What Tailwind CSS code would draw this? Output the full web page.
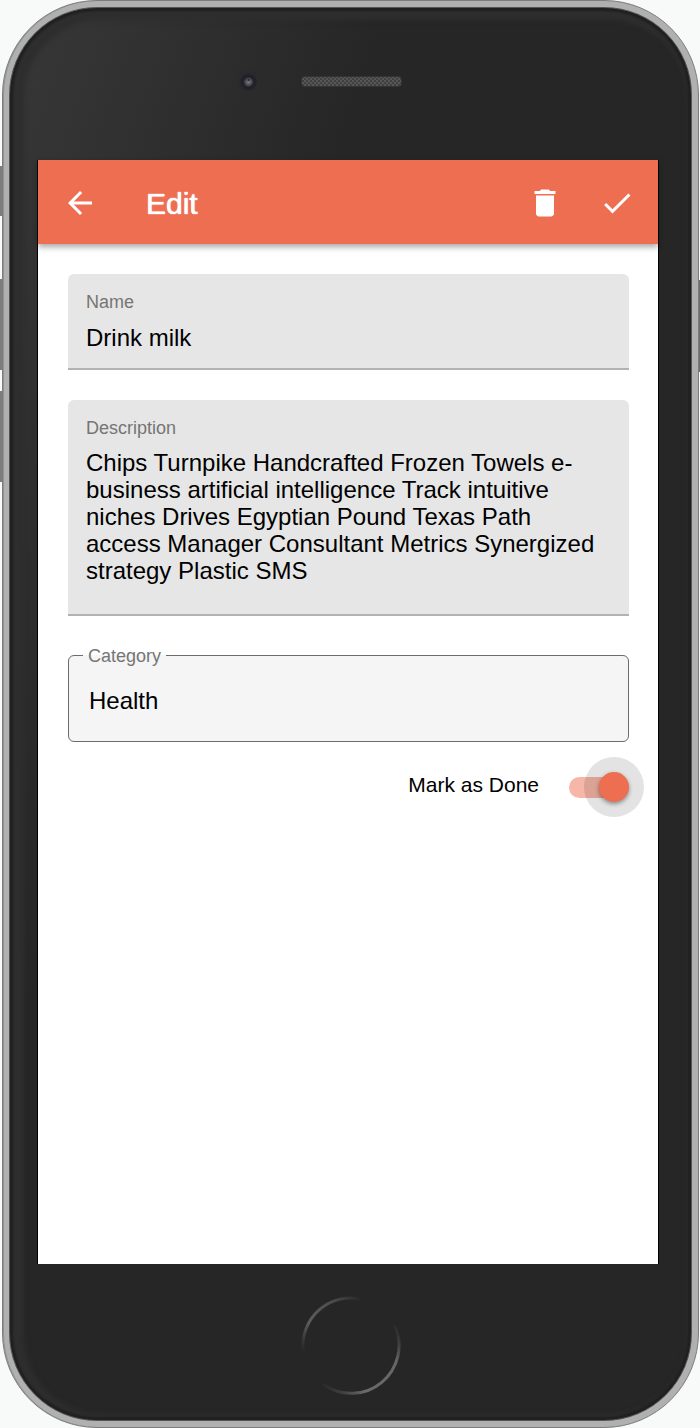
<!DOCTYPE html>
<html lang="en">
<head>
<meta charset="utf-8">
<meta name="viewport" content="width=device-width, initial-scale=1">
<title>Edit</title>
<script src="https://cdn.jsdelivr.net/npm/@tailwindcss/browser@4"></script>
</head>
<body class="bg-[#f8faf9] font-['Liberation_Sans',Arial,sans-serif] text-black">
<div class="relative flex min-h-screen flex-col overflow-hidden pr-px pl-[2px]">
  <!-- hardware buttons on the sides of the phone -->
  <span class="absolute top-[166px] left-0 h-[50px] w-[3px] bg-[#7d7d7d]"></span>
  <span class="absolute top-[279px] left-0 h-[91px] w-[3px] bg-[#7d7d7d]"></span>
  <span class="absolute top-[391px] left-0 h-[91px] w-[3px] bg-[#7d7d7d]"></span>
  <span class="absolute top-[280px] right-0 h-[92px] w-[2px] bg-[#6e6e6e]"></span>

  <div class="relative flex flex-1 flex-col rounded-[95px] border border-[#7c7c7c] bg-[#b0b0b0] p-[6px] shadow-[inset_1px_0_0_#8f9391]">
    <div class="flex flex-1 flex-col rounded-[88px] border border-[#555] bg-[linear-gradient(110deg,#383838,#262626_32%)] shadow-[inset_0_0_2px_3px_#202020,inset_5px_3px_5px_9px_#2e2e2e]">
      <div class="flex h-[152px] shrink-0 justify-center pt-[54px]">
        <svg class="h-10 w-[302px] shrink-0" viewBox="200 62 302 40" aria-hidden="true">
          <defs>
            <pattern id="mesh" width="4" height="4" patternUnits="userSpaceOnUse">
              <rect width="4" height="4" fill="#404040"/>
              <rect width="2" height="2" fill="#565656"/>
              <rect x="2" y="2" width="2" height="2" fill="#565656"/>
            </pattern>
            <radialGradient id="lens">
              <stop offset="0" stop-color="#7b7b82"/>
              <stop offset=".35" stop-color="#4c4c54"/>
              <stop offset=".6" stop-color="#1f1e26"/>
              <stop offset="1" stop-color="#28272d"/>
            </radialGradient>
          </defs>
          <circle cx="248" cy="81" r="11" fill="#2b2b2e"/>
          <circle cx="248.500" cy="82" r="9" fill="url(#lens)"/>
          <circle cx="248.500" cy="80" r="1" fill="#24232b"/>
          <rect x="301" y="76" width="101" height="11" rx="4" fill="#343434"/>
          <rect x="302" y="77" width="99" height="9" rx="3" fill="url(#mesh)"/>
        </svg>
      </div>

      <main class="mr-[32px] ml-[27px] flex flex-1 flex-col border-x border-black bg-white">
        <header class="flex h-[84px] shrink-0 items-center bg-[#ee6e52] pt-px pr-[23px] pl-6 text-white shadow-[0_3px_6px_rgba(0,0,0,0.35)]">
          <button type="button" aria-label="Back" class="size-9">
            <svg class="size-9" viewBox="0 0 24 24" fill="currentColor"><path d="M20 11H7.830l5.590-5.590L12 4l-8 8 8 8 1.410-1.410L7.830 13H20v-2z"/></svg>
          </button>
          <h1 class="ml-12 flex-1 pt-[2px] text-[30px] leading-9 [text-shadow:0_0_1px_white,0_0_1px_white]">Edit</h1>
          <div class="flex gap-9">
            <button type="button" aria-label="Delete" class="size-9">
              <svg class="size-9" viewBox="0 0 24 24" fill="currentColor"><path d="M6 19c0 1.100.9 2 2 2h8c1.100 0 2-.9 2-2V7H6v12zM19 4h-3.500l-1-1h-5l-1 1H5v2h14V4z"/></svg>
            </button>
            <button type="button" aria-label="Save" class="size-9">
              <svg class="size-9" viewBox="0 0 24 24" fill="currentColor"><path d="M9 16.170L4.830 12l-1.420 1.410L9 19 21 7l-1.410-1.410z"/></svg>
            </button>
          </div>
        </header>

        <form class="flex flex-col pt-[30px] pr-[29px] pl-[30px]">
          <div class="flex h-24 flex-col rounded-t-md border-b-2 border-[#b2b2b2] bg-[#e6e6e6] px-[18px] pt-[18px]">
            <label for="name" class="text-lg leading-5 text-[#757575]">Name</label>
            <input id="name" type="text" value="Drink milk" class="mt-3 w-full bg-transparent text-2xl leading-7 outline-none">
          </div>

          <div class="mt-[30px] flex h-[216px] flex-col rounded-t-md border-b-2 border-[#b2b2b2] bg-[#e6e6e6] px-[18px] pt-[18px]">
            <label for="description" class="text-lg leading-5 text-[#757575]">Description</label>
            <textarea id="description" class="mt-[11px] w-full flex-1 resize-none overflow-hidden bg-transparent pr-2 text-2xl leading-[27px] outline-none">Chips Turnpike Handcrafted Frozen Towels e-business artificial intelligence Track intuitive niches Drives Egyptian Pound Texas Path access Manager Consultant Metrics Synergized strategy Plastic SMS</textarea>
          </div>

          <fieldset class="mt-[29px] rounded-md border border-[#6c6c6c] bg-[#f5f5f5]">
            <legend class="ml-[14px] h-5 px-[5px] pt-px text-lg leading-5 text-[#757575]"><label for="category">Category</label></legend>
            <select id="category" class="block h-[76px] w-full appearance-none bg-transparent pb-1 pl-5 text-2xl outline-none">
              <option>Health</option>
            </select>
          </fieldset>

          <div class="mt-[30px] flex items-center justify-end">
            <label for="done" class="pb-1 text-[21px] leading-6">Mark as Done</label>
            <span class="relative ml-[30px] flex h-[30px] w-[60px] items-center">
              <input id="done" type="checkbox" role="switch" checked class="h-[21px] w-[54px] appearance-none rounded-full bg-[#f6b6a8]">
              <span class="pointer-events-none absolute -top-[15px] -right-[15px] flex size-[60px] items-center justify-center rounded-full bg-black/11">
                <span class="size-[30px] rounded-full bg-[#ee6e52] shadow-[0_2px_4px_rgba(0,0,0,0.4)]"></span>
              </span>
            </span>
          </div>
        </form>
      </main>

      <div class="flex h-[156px] shrink-0 justify-center pt-[30px]">
        <button type="button" aria-label="Home" class="size-[104px] rounded-full">
          <svg class="size-[104px]" viewBox="0 0 104 104" fill="none" stroke-width="3" stroke-linecap="round" aria-hidden="true">
            <defs>
              <linearGradient id="arcTop" gradientUnits="userSpaceOnUse" x1="2" y1="56" x2="62" y2="4">
                <stop offset="0" stop-color="#555" stop-opacity="0"/>
                <stop offset=".3" stop-color="#5c5c5c"/>
                <stop offset=".7" stop-color="#4c4c4c"/>
                <stop offset="1" stop-color="#555" stop-opacity="0"/>
              </linearGradient>
              <linearGradient id="arcBottom" gradientUnits="userSpaceOnUse" x1="24" y1="94" x2="98" y2="30">
                <stop offset="0" stop-color="#666" stop-opacity="0"/>
                <stop offset=".3" stop-color="#6b6b6b"/>
                <stop offset=".75" stop-color="#666"/>
                <stop offset="1" stop-color="#555" stop-opacity="0"/>
              </linearGradient>
            </defs>
            <path d="M4 56A48 48 0 0 1 62 5" stroke="url(#arcTop)"/>
            <path d="M96 32A48 48 0 0 1 25 91" stroke="url(#arcBottom)"/>
          </svg>
        </button>
      </div>
    </div>
  </div>
</div>
</body>
</html>
